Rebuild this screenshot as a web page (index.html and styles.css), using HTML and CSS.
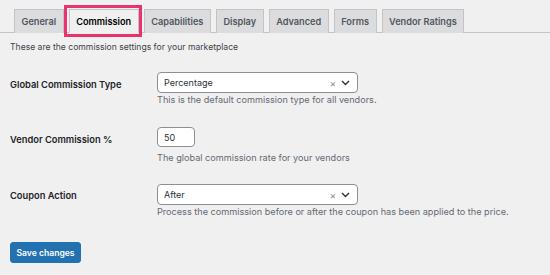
FILE: index.html
```html
<!DOCTYPE html>
<html lang="en">
<head>
    <meta charset="UTF-8">
    <title>Commission Settings</title>
    <link rel="stylesheet" href="styles.css">
</head>
<body>
    <nav class="nav-tabs">
        <a class="nav-tab">General</a>
        <a class="nav-tab nav-tab-active">Commission</a>
        <a class="nav-tab">Capabilities</a>
        <a class="nav-tab">Display</a>
        <a class="nav-tab">Advanced</a>
        <a class="nav-tab">Forms</a>
        <a class="nav-tab">Vendor Ratings</a>
    </nav>

    <div class="wrap">
        <p class="intro">These are the commission settings for your marketplace</p>

        <div class="form-row">
            <label class="row-label">Global Commission Type</label>
            <div class="field">
                <div class="select">
                    <span>Percentage</span>
                    <span class="select-icons">
                        <span class="clear">&times;</span>
                        <svg width="9" height="6" viewBox="0 0 9 6" fill="none" stroke="#2c3338" stroke-width="1.4">
                            <polyline points="1 1 4.5 4.5 8 1"></polyline>
                        </svg>
                    </span>
                </div>
                <p class="description">This is the default commission type for all vendors.</p>
            </div>
        </div>

        <div class="form-row row-rate">
            <label class="row-label">Vendor Commission %</label>
            <div class="field">
                <input type="text" class="small-input" value="50">
                <p class="description spaced">The global commission rate for your vendors</p>
            </div>
        </div>

        <div class="form-row row-coupon">
            <label class="row-label">Coupon Action</label>
            <div class="field">
                <div class="select">
                    <span>After</span>
                    <span class="select-icons">
                        <span class="clear">&times;</span>
                        <svg width="9" height="6" viewBox="0 0 9 6" fill="none" stroke="#2c3338" stroke-width="1.4">
                            <polyline points="1 1 4.5 4.5 8 1"></polyline>
                        </svg>
                    </span>
                </div>
                <p class="description">Process the commission before or after the coupon has been applied to the price.</p>
            </div>
        </div>

        <button class="btn-primary">Save changes</button>
    </div>
</body>
</html>
```

FILE: styles.css
```css
* {
    box-sizing: border-box;
    margin: 0;
    padding: 0;
}

body {
    font-family: Inter, "Liberation Sans", sans-serif;
    font-size: 9px;
    background: #f0f0f1;
    color: #1d2327;
    width: 550px;
    height: 275px;
    overflow: hidden;
}

.nav-tabs {
    display: flex;
    padding: 9px 0 0 9px;
    border-bottom: 1px solid #c3c4c7;
}

.nav-tab {
    position: relative;
    display: block;
    height: 24px;
    line-height: 23px;
    padding: 0 6.5px;
    margin-left: 5px;
    margin-bottom: -1px;
    background: #dcdcde;
    border: 1px solid #c3c4c7;
    border-bottom: none;
    color: #50575e;
    font-size: 9.2px;
    font-weight: 600;
}

.nav-tab-active {
    background: #f0f0f1;
    color: #000;
    border-bottom: 1px solid #f0f0f1;
}

.nav-tab-active::after {
    content: "";
    position: absolute;
    top: -5px;
    bottom: -5px;
    left: -6px;
    right: -4px;
    border: 3px solid #e8336f;
}

.wrap {
    padding: 0 10px;
}

.intro {
    margin-top: 7px;
    line-height: 14px;
    font-size: 8.6px;
    color: #3c434a;
}

.form-row {
    display: flex;
    margin-top: 18px;
}

.row-rate {
    margin-top: 20px;
}

.row-coupon {
    margin-top: 19px;
}

.row-label {
    width: 147px;
    flex-shrink: 0;
    padding-top: 2px;
    line-height: 21px;
    font-size: 9.3px;
    font-weight: 600;
}

.row-rate .row-label {
    padding-top: 3px;
    line-height: 20px;
}

.row-coupon .row-label {
    padding-top: 1px;
}

.select {
    display: flex;
    align-items: center;
    justify-content: space-between;
    width: 201px;
    height: 21px;
    padding: 0 7px 0 6px;
    background: #fff;
    border: 1px solid #8c8f94;
    border-radius: 4px;
    color: #2c3338;
}

.select-icons {
    display: flex;
    align-items: center;
    gap: 5px;
}

.clear {
    color: #8c8f94;
    font-size: 10px;
    line-height: 1;
}

.small-input {
    display: block;
    width: 38px;
    height: 20px;
    padding: 0 6px;
    background: #fff;
    border: 1px solid #8c8f94;
    border-radius: 4px;
    font-family: inherit;
    font-size: 9px;
    color: #2c3338;
}

.description {
    line-height: 14px;
    font-size: 9.15px;
    color: #646970;
}

.description.spaced {
    margin-top: 4px;
}

.btn-primary {
    display: block;
    margin-top: 23px;
    width: 71px;
    height: 21px;
    background: #2271b1;
    border: 1px solid #2271b1;
    border-radius: 3px;
    color: #fff;
    font-family: inherit;
    font-size: 8.6px;
    font-weight: 600;
}
```
